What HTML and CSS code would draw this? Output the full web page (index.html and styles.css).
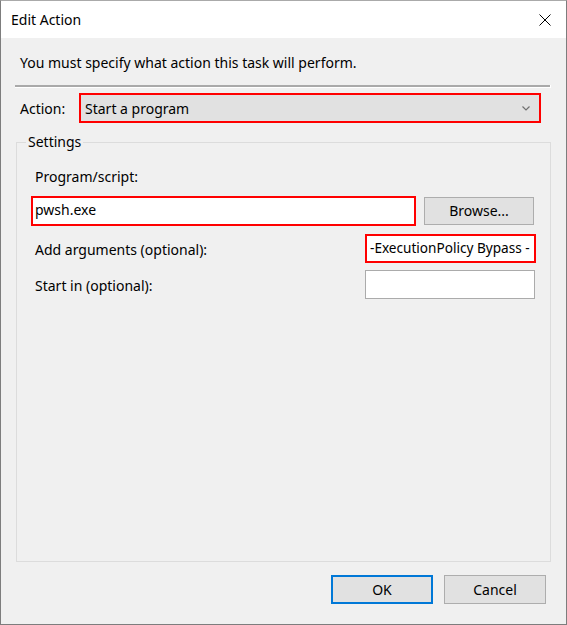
FILE: index.html
```html
<!DOCTYPE html>
<html>
<head>
<meta charset="utf-8">
<link rel="stylesheet" href="styles.css">
</head>
<body>
<div class="window">
  <div class="titlebar">
    <span class="title">Edit Action</span>
    <svg class="close" width="12" height="12" viewBox="0 0 12 12"><path d="M0.5 0.5 L11.5 11.5 M11.5 0.5 L0.5 11.5" stroke="#000" stroke-width="1" fill="none"/></svg>
  </div>
  <div class="content">
    <div class="intro">You must specify what action this task will perform.</div>
    <div class="separator"></div>
    <div class="action-row">
      <span class="label">Action:</span>
      <div class="combo marked">
        <span>Start a program</span>
        <svg class="chevron" width="8" height="5" viewBox="0 0 8 5"><path d="M0.5 0.5 L4 4 L7.5 0.5" stroke="#707070" stroke-width="1.2" fill="none"/></svg>
      </div>
    </div>
    <fieldset class="group">
      <legend>Settings</legend>
      <div class="field-label">Program/script:</div>
      <div class="program-row">
        <div class="textbox program marked">pwsh.exe</div>
        <div class="button browse">Browse...</div>
      </div>
      <div class="opt-row args-row">
        <span class="label">Add arguments (optional):</span>
        <div class="textbox args marked">-ExecutionPolicy Bypass -</div>
      </div>
      <div class="opt-row start-row">
        <span class="label">Start in (optional):</span>
        <div class="textbox startin"></div>
      </div>
    </fieldset>
    <div class="buttons">
      <div class="button ok">OK</div>
      <div class="button cancel">Cancel</div>
    </div>
  </div>
</div>
</body>
</html>
```
FILE: styles.css
```css
html, body {
  margin: 0;
  padding: 0;
  background: #f0f0f0;
}
body {
  font-family: "Noto Sans", "Open Sans", sans-serif;
  font-size: 14px;
  color: #000;
}
.window {
  width: 567px;
  height: 625px;
  box-sizing: border-box;
  border: 1px solid #7d7d7d;
  border-top-color: #aaaaaa;
  display: flex;
  flex-direction: column;
  background: #f0f0f0;
}
.titlebar {
  height: 37px;
  background: #fff;
  display: flex;
  align-items: center;
  justify-content: space-between;
  padding: 0 15px 0 10px;
  flex: none;
}
.title {
  font-size: 14px;
  line-height: 20px;
}
.close {
  display: block;
  margin-top: 1px;
}
.content {
  flex: 1;
  display: flex;
  flex-direction: column;
}
.intro {
  margin: 15px 0 0 19px;
  line-height: 20px;
}
.separator {
  margin: 12px 15px 0 14px;
  height: 2px;
  background: #a9a9a9;
  border-bottom: 1px solid #fff;
  border-right: 1px solid #fff;
}
.action-row {
  display: flex;
  align-items: center;
  margin: 5px 0 0 19px;
  height: 30px;
}
.action-row .label {
  width: 59px;
  line-height: 20px;
  padding-top: 2px;
}
.marked {
  border: 2px solid #ff0000 !important;
}
.combo {
  box-sizing: border-box;
  width: 462px;
  height: 30px;
  background: #e1e1e1;
  display: flex;
  align-items: center;
  justify-content: space-between;
  padding: 0 9px 0 4px;
}
.chevron {
  display: block;
  margin-top: 1px;
}
.group {
  box-sizing: border-box;
  margin: 9px 15px 0 15px;
  height: 430px;
  border: 1px solid #dcdcdc;
  padding: 0 0 0 14px;
  min-width: 0;
}
.group legend {
  margin-left: -5px;
  padding: 0 2px;
  line-height: 20px;
}
.field-label {
  margin: 15px 0 0 4px;
  line-height: 20px;
}
.program-row {
  display: flex;
  align-items: center;
  margin-top: 9px;
  height: 30px;
}
.textbox {
  box-sizing: border-box;
  background: #fff;
  border: 1px solid #ababab;
  line-height: 20px;
  white-space: nowrap;
  overflow: hidden;
}
.program {
  width: 385px;
  height: 30px;
  padding: 2px 3px 0 2px;
}
.button {
  box-sizing: border-box;
  background: #e1e1e1;
  border: 1px solid #adadad;
  display: flex;
  align-items: center;
  justify-content: center;
  line-height: 20px;
}
.browse {
  margin-left: 8px;
  width: 110px;
  height: 28px;
}
.opt-row {
  display: flex;
  align-items: center;
  justify-content: space-between;
  padding: 0 15px 0 4px;
  height: 29px;
}
.args-row {
  margin-top: 8px;
}
.start-row {
  margin-top: 7px;
}
.opt-row .label {
  line-height: 20px;
  padding-top: 3px;
}
.args {
  width: 171px;
  height: 29px;
  padding: 2px 0 0 3px;
  margin-right: -1px;
  font-size: 13.6px;
}
.startin {
  width: 170px;
  height: 29px;
}
.buttons {
  display: flex;
  justify-content: flex-end;
  gap: 11px;
  margin: 13px 20px 0 0;
}
.ok, .cancel {
  width: 102px;
  height: 29px;
}
.ok {
  border: 2px solid #0078d7;
}
```
